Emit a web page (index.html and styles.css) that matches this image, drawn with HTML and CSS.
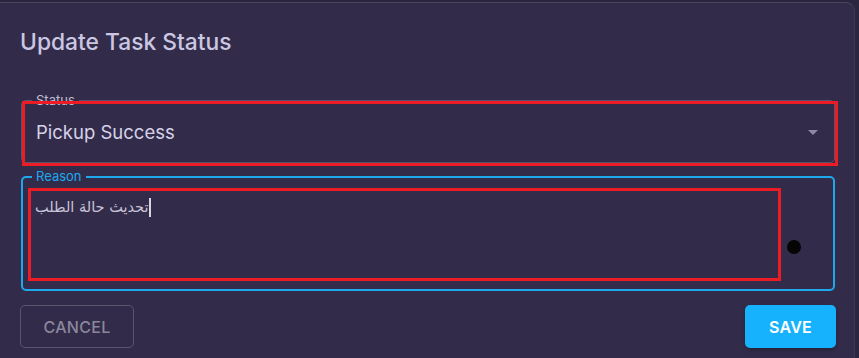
FILE: index.html
```html
<!DOCTYPE html>
<html lang="en">
<head>
<meta charset="utf-8">
<title>Update Task Status</title>
<link rel="stylesheet" href="styles.css">
</head>
<body>
<div class="backdrop">
  <div class="dialog">
    <h2 class="title">Update Task Status</h2>
    <div class="field field-status">
      <span class="label">Status</span>
      <span class="value">Pickup Success</span>
      <span class="arrow"></span>
      <span class="mark mark-status"></span>
    </div>
    <div class="field field-reason">
      <span class="label label-focus">Reason</span>
      <div class="text"><span class="arabic" dir="rtl">تحديث حالة الطلب</span><span class="caret"></span></div>
      <span class="mark mark-reason"></span>
      <span class="dot"></span>
    </div>
    <div class="actions">
      <button class="btn btn-cancel" type="button">Cancel</button>
      <button class="btn btn-save" type="button">Save</button>
    </div>
  </div>
</div>
</body>
</html>
```
FILE: styles.css
```css
* { box-sizing: border-box; }
html, body { margin: 0; padding: 0; }
body {
  background: #2a2640;
  font-family: Inter, "Noto Sans", "DejaVu Sans", sans-serif;
  width: 859px;
  height: 358px;
  overflow: hidden;
}
.backdrop {
  padding-top: 2px;
}
.dialog {
  width: 855px;
  height: 356px;
  background: #322c4a;
  border-top: 1px solid #4a4562;
  border-right: 1px solid #3d3857;
  border-radius: 0 9px 0 0;
  padding: 23px 20px 0 21px;
}
.title {
  margin: 0;
  font-size: 22.8px;
  line-height: 32px;
  font-weight: 500;
  color: #cbc7e2;
  margin-left: -1px;
}
.field {
  position: relative;
  width: 814px;
  border-radius: 5px;
}
.field-status {
  margin-top: 42px;
  height: 63px;
  border: 1px solid #57536e;
  display: flex;
  align-items: center;
  padding-left: 14px;
}
.label {
  position: absolute;
  top: -9px;
  left: 10px;
  padding: 0 4px;
  font-size: 13px;
  line-height: 16px;
  color: #c0bcd2;
  background: #322c4a;
}
.value {
  font-size: 18.5px;
  color: #d6d2e8;
  line-height: 24px;
}
.arrow {
  position: absolute;
  right: 16px;
  top: 29px;
  width: 0;
  height: 0;
  border-left: 5px solid transparent;
  border-right: 5px solid transparent;
  border-top: 5px solid #8d89a3;
}
.mark {
  position: absolute;
  border: 3px solid #ec1c24;
  pointer-events: none;
}
.mark-status {
  left: 0;
  top: 0;
  width: 816px;
  height: 65px;
}
.field-reason {
  margin-top: 13px;
  height: 115px;
  border: 2px solid #1ea8ee;
  padding: 18px 0 0 12px;
}
.field-reason .label {
  top: -10px;
  left: 9px;
}
.label-focus {
  color: #1ea8ee;
}
.text {
  display: flex;
  align-items: center;
  height: 22px;
}
.arabic {
  font-family: "DejaVu Sans", sans-serif;
  font-size: 14.5px;
  color: #c8c4d8;
  unicode-bidi: isolate;
}
.caret {
  display: inline-block;
  width: 2px;
  height: 19px;
  background: #d8d4e6;
  margin-left: 1px;
}
.mark-reason {
  left: 5px;
  top: 10px;
  width: 753px;
  height: 93px;
}
.dot {
  position: absolute;
  left: 764px;
  top: 62px;
  width: 14px;
  height: 14px;
  border-radius: 50%;
  background: #050505;
}
.actions {
  margin-top: 14px;
  margin-left: -1px;
  width: 816px;
  display: flex;
  justify-content: space-between;
}
.btn {
  font-family: Inter, "Noto Sans", sans-serif;
  text-transform: uppercase;
  height: 43px;
  border-radius: 5px;
  font-size: 16px;
  letter-spacing: 0.3px;
  cursor: pointer;
}
.btn-cancel {
  width: 114px;
  background: transparent;
  border: 1px solid #5a566e;
  color: #8a879c;
  font-weight: 500;
}
.btn-save {
  width: 91px;
  background: #17b2fd;
  border: none;
  color: #ffffff;
  font-weight: 600;
  box-shadow: 0 2px 4px rgba(0,0,0,0.25);
}
```
